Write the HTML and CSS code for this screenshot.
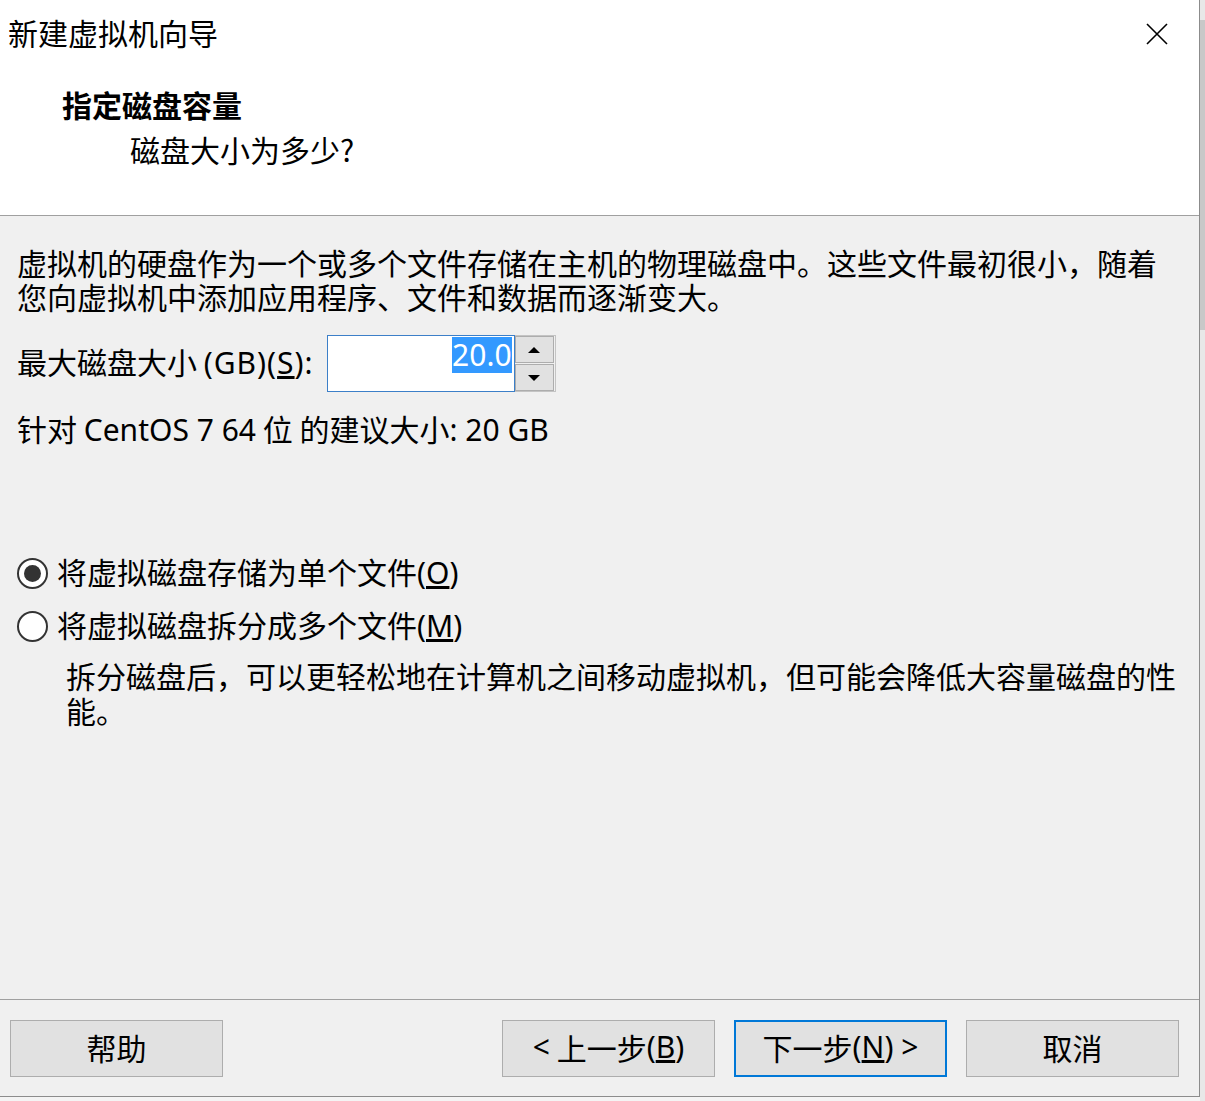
FILE: index.html
```html
<!DOCTYPE html>
<html lang="zh-CN">
<head>
<meta charset="utf-8">
<title>新建虚拟机向导</title>
<link rel="stylesheet" href="styles.css">
</head>
<body>
<div class="screen">
  <div class="window">
    <div class="header">
      <div class="titlebar">
        <div class="title">新建虚拟机向导</div>
        <div class="close">
          <svg width="22" height="22" viewBox="0 0 22 22"><path d="M1 1 L21 21 M21 1 L1 21" stroke="#000" stroke-width="1.6" fill="none"/></svg>
        </div>
      </div>
      <div class="heading">指定磁盘容量</div>
      <div class="subheading">磁盘大小为多少?</div>
    </div>
    <div class="body">
      <p class="para">虚拟机的硬盘作为一个或多个文件存储在主机的物理磁盘中。这些文件最初很小，随着您向虚拟机中添加应用程序、文件和数据而逐渐变大。</p>
      <div class="size-row">
        <span class="label">最大磁盘大小 <span class="lat wide">(GB)(<u>S</u>):</span></span>
        <div class="spin">
          <div class="spin-input"><span class="sel">20.0</span></div>
          <div class="spin-btns">
            <div class="spin-btn"><span class="tri-up"></span></div>
            <div class="spin-btn"><span class="tri-down"></span></div>
          </div>
        </div>
      </div>
      <div class="suggest">针对 <span class="lat">CentOS 7 64</span> 位 的建议大小<span class="lat">: 20 GB</span></div>
      <div class="radio-row first">
        <span class="radio checked"></span>
        <span class="radio-label">将虚拟磁盘存储为单个文件<span class="lat">(<u>O</u>)</span></span>
      </div>
      <div class="radio-row second">
        <span class="radio"></span>
        <span class="radio-label">将虚拟磁盘拆分成多个文件<span class="lat">(<u>M</u>)</span></span>
      </div>
      <p class="desc">拆分磁盘后，可以更轻松地在计算机之间移动虚拟机，但可能会降低大容量磁盘的性能。</p>
    </div>
    <div class="footer">
      <button class="btn">帮助</button>
      <button class="btn push"><span class="lat">&lt;</span> 上一步<span class="lat">(<u>B</u>)</span></button>
      <button class="btn default">下一步<span class="lat">(<u>N</u>) &gt;</span></button>
      <button class="btn">取消</button>
    </div>
  </div>
  <div class="strip">
    <div class="strip-thumb"></div>
  </div>
</div>
</body>
</html>
```
FILE: styles.css
```css
html, body {
  margin: 0;
  padding: 0;
  background: #f4f4f4;
}
body {
  font-family: "Noto Sans CJK SC", "Noto Sans", sans-serif;
  font-size: 30px;
  color: #000;
}
.lat {
  font-family: "Noto Sans", "Open Sans", "Noto Sans CJK SC", sans-serif;
}
.lat.wide {
  letter-spacing: 1px;
}
.screen {
  display: flex;
  width: 1205px;
  height: 1101px;
  overflow: hidden;
}
.window {
  width: 1199px;
  height: 1096px;
  border-right: 1px solid #8c8c8c;
  border-bottom: 1px solid #8c8c8c;
  background: #f0f0f0;
  display: flex;
  flex-direction: column;
  flex: none;
}
.header {
  background: #fff;
  border-bottom: 1px solid #a0a0a0;
  box-sizing: border-box;
  height: 216px;
  padding: 12px 0 0 8px;
  flex: none;
}
.titlebar {
  display: flex;
  justify-content: space-between;
  align-items: center;
  height: 40px;
}
.title {
  line-height: 40px;
}
.close {
  width: 22px;
  height: 22px;
  margin: 4px 31px 0 0;
  display: flex;
}
.heading {
  margin: 32px 0 0 54px;
  line-height: 40px;
  font-weight: bold;
}
.subheading {
  margin: 5px 0 0 122px;
  line-height: 40px;
}
.body {
  flex: 1;
  padding: 29px 19px 0 17px;
}
.para {
  margin: 0;
  line-height: 34px;
}
.size-row {
  margin-top: 22px;
  height: 57px;
  display: flex;
  align-items: center;
  gap: 13px;
}
.label {
  line-height: 40px;
  margin-top: -4px;
}
.spin {
  display: flex;
  height: 57px;
}
.spin-input {
  width: 184px;
  height: 55px;
  border: 1px solid #3c7fc8;
  background: #fff;
  display: flex;
  justify-content: flex-end;
  align-items: flex-start;
  padding-right: 2px;
}
.sel {
  background: #3399ff;
  color: #fff;
  margin-top: 1px;
  line-height: 36px;
  font-family: "Noto Sans", "Open Sans", sans-serif;
}
.spin-btns {
  width: 39px;
  height: 55px;
  border: 1px solid #c4c4c4;
  border-left: none;
  display: flex;
  flex-direction: column;
  gap: 1px;
  padding: 0 1px 0 0;
}
.spin-btn {
  flex: 1;
  background: #e1e1e1;
  border: 1px solid #adadad;
  display: flex;
  align-items: center;
  justify-content: center;
}
.tri-up, .tri-down {
  width: 0;
  height: 0;
  border-left: 6px solid transparent;
  border-right: 6px solid transparent;
}
.tri-up {
  border-bottom: 6px solid #000;
}
.tri-down {
  border-top: 6px solid #000;
}
.suggest {
  margin-top: 16px;
  line-height: 40px;
}
.radio-row {
  display: flex;
  align-items: center;
  height: 40px;
  gap: 9px;
}
.radio-row.first {
  margin-top: 103px;
}
.radio-row.second {
  margin-top: 13px;
}
.radio-label {
  line-height: 40px;
  margin-top: -2px;
}
.radio {
  width: 27px;
  height: 27px;
  border: 2px solid #333;
  border-radius: 50%;
  background: #fff;
  display: flex;
  align-items: center;
  justify-content: center;
  flex: none;
}
.radio.checked::after {
  content: "";
  width: 17px;
  height: 17px;
  border-radius: 50%;
  background: #333;
}
.desc {
  margin: 12px 0 0 49px;
  line-height: 35px;
}
.footer {
  flex: none;
  border-top: 1px solid #a0a0a0;
  padding: 20px 20px 19px 10px;
  display: flex;
  gap: 19px;
}
.btn {
  width: 213px;
  height: 57px;
  background: #e1e1e1;
  border: 1px solid #adadad;
  font: inherit;
  color: #000;
  padding: 0 0 3px 0;
  margin: 0;
  line-height: 1;
  display: flex;
  align-items: center;
  justify-content: center;
  white-space: pre;
}
.btn.push {
  margin-left: auto;
}
.btn.default {
  border: 2px solid #0078d7;
}
.strip {
  width: 5px;
  flex: none;
  background: #e8e8e8;
  padding-top: 20px;
}
.strip-thumb {
  height: 310px;
  background: #c8c8c8;
}
```
